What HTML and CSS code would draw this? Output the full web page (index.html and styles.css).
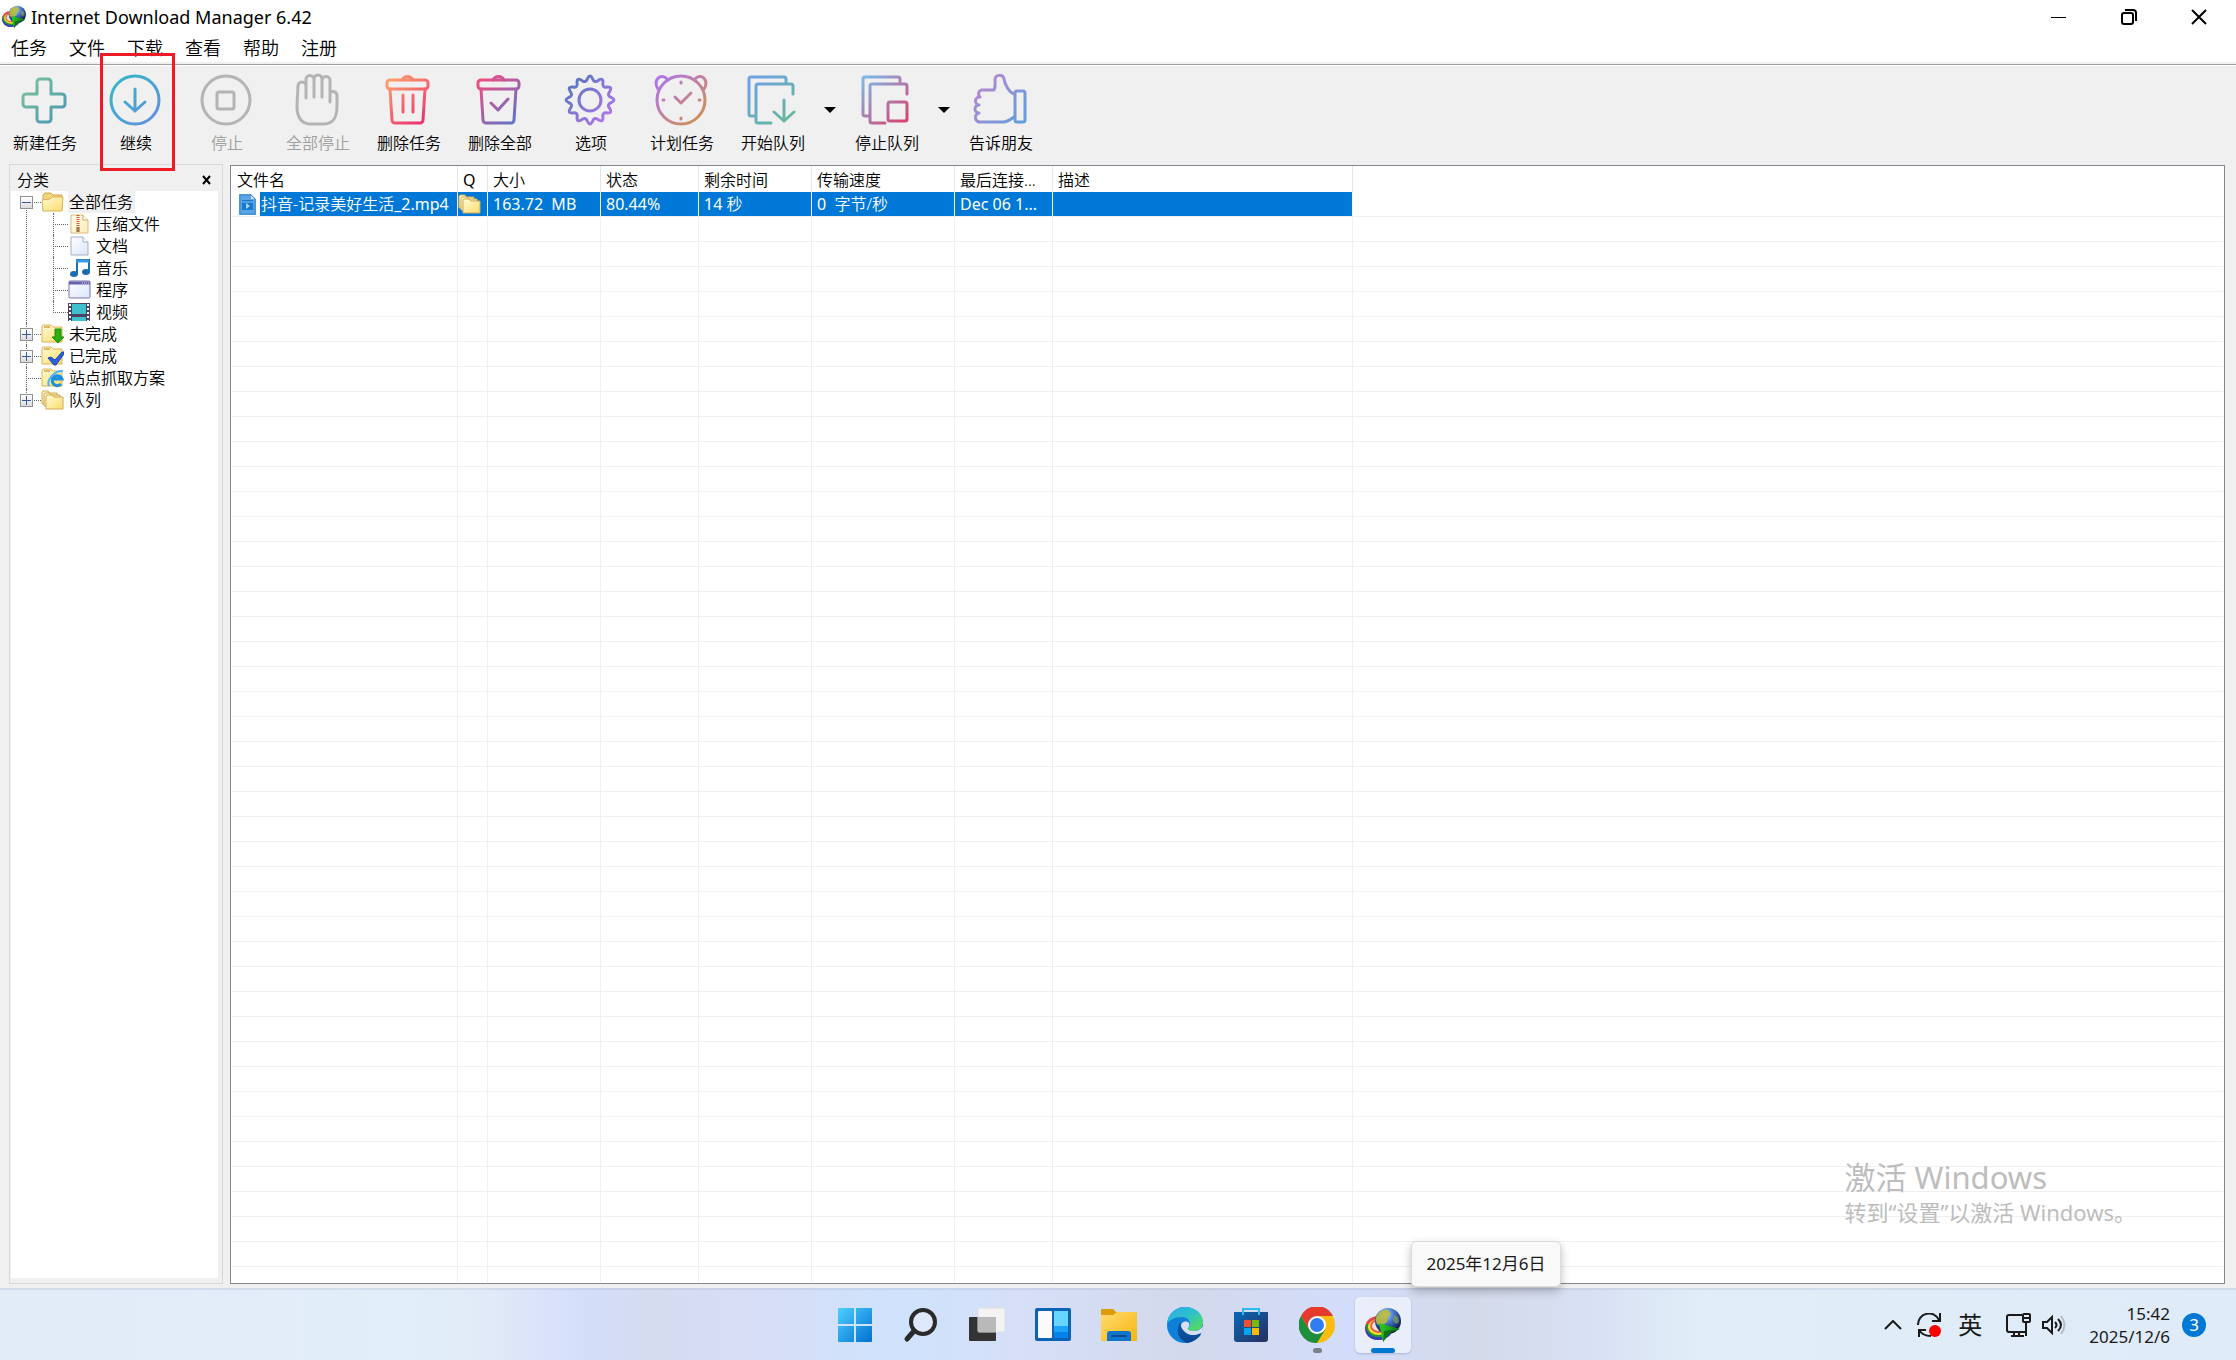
FILE: index.html
```
<!DOCTYPE html>
<html lang="zh-CN">

<head>
    <meta charset="UTF-8">
    <meta name="viewport" content="width=device-width, initial-scale=1.0">
    <title>Internet Download Manager 6.42</title>
    <link rel="stylesheet" href="styles.css">
</head>

<body>

    <!-- shared gradients and icons -->
    <svg class="defs" width="0" height="0" aria-hidden="true">
        <defs>
            <linearGradient id="gPlus" gradientUnits="userSpaceOnUse" x1="4" y1="4" x2="48" y2="48"><stop offset="0" stop-color="#7cc79a"/><stop offset="1" stop-color="#4a94b0"/></linearGradient>
            <linearGradient id="gResume" gradientUnits="userSpaceOnUse" x1="4" y1="4" x2="48" y2="48"><stop offset="0" stop-color="#36b8c6"/><stop offset="1" stop-color="#5f90e2"/></linearGradient>
            <linearGradient id="gTrash" gradientUnits="userSpaceOnUse" x1="6" y1="4" x2="42" y2="50"><stop offset="0" stop-color="#ffa36b"/><stop offset="1" stop-color="#ea2e72"/></linearGradient>
            <linearGradient id="gTrashAll" gradientUnits="userSpaceOnUse" x1="6" y1="8" x2="42" y2="50"><stop offset="0" stop-color="#ee4d84"/><stop offset="1" stop-color="#5b74c8"/></linearGradient>
            <linearGradient id="gGear" gradientUnits="userSpaceOnUse" x1="-20" y1="-20" x2="20" y2="20"><stop offset="0" stop-color="#5878bd"/><stop offset="1" stop-color="#b176ea"/></linearGradient>
            <linearGradient id="gClock" gradientUnits="userSpaceOnUse" x1="4" y1="6" x2="44" y2="48"><stop offset="0" stop-color="#b077e6"/><stop offset="1" stop-color="#d08f55"/></linearGradient>
            <linearGradient id="gStart" gradientUnits="userSpaceOnUse" x1="6" y1="6" x2="44" y2="48"><stop offset="0" stop-color="#6ea2e6"/><stop offset="1" stop-color="#67b898"/></linearGradient>
            <linearGradient id="gStop" gradientUnits="userSpaceOnUse" x1="6" y1="6" x2="44" y2="48"><stop offset="0" stop-color="#7fb4e6"/><stop offset="1" stop-color="#d9446f"/></linearGradient>
            <linearGradient id="gThumb" gradientUnits="userSpaceOnUse" x1="8" y1="6" x2="48" y2="44"><stop offset="0" stop-color="#b787d0"/><stop offset="1" stop-color="#649edb"/></linearGradient>
            <linearGradient id="gFolder" x1="0" y1="0" x2="1" y2="1"><stop offset="0" stop-color="#fffbd6"/><stop offset="1" stop-color="#fbdc6a"/></linearGradient>
            <linearGradient id="gPaper" x1="0" y1="0" x2="1" y2="1"><stop offset="0" stop-color="#ffffff"/><stop offset="1" stop-color="#d8e6fa"/></linearGradient>
            <linearGradient id="gZip" x1="0" y1="0" x2="1" y2="1"><stop offset="0" stop-color="#fffdf0"/><stop offset="1" stop-color="#fdebb4"/></linearGradient>
            <linearGradient id="gWin" x1="0" y1="0" x2="1" y2="1"><stop offset="0" stop-color="#4fd0ff"/><stop offset="1" stop-color="#0070d0"/></linearGradient>
            <linearGradient id="gExplorer" x1="0" y1="0" x2="1" y2="1"><stop offset="0" stop-color="#ffdb70"/><stop offset="1" stop-color="#f9b50f"/></linearGradient>
            <linearGradient id="gStore" x1="0" y1="0" x2="1" y2="1"><stop offset="0" stop-color="#0a67b8"/><stop offset="1" stop-color="#27305e"/></linearGradient>
            <linearGradient id="gEdge" x1="0" y1="0" x2="1" y2="1"><stop offset="0" stop-color="#2ea8ea"/><stop offset="0.5" stop-color="#2cc3c8"/><stop offset="1" stop-color="#62e040"/></linearGradient>
            <linearGradient id="gEdgeDark" x1="0" y1="0" x2="0" y2="1"><stop offset="0" stop-color="#0e5ba8"/><stop offset="1" stop-color="#0c4591"/></linearGradient>
            <radialGradient id="gGlobe" cx="0.4" cy="0.25" r="0.75"><stop offset="0" stop-color="#c4dcfa"/><stop offset="0.4" stop-color="#4c80d6"/><stop offset="1" stop-color="#06103c"/></radialGradient>
            <linearGradient id="gArrow" x1="0" y1="0" x2="1" y2="0"><stop offset="0" stop-color="#2ecc22"/><stop offset="1" stop-color="#0b7a10"/></linearGradient>
        </defs>

        <symbol id="idm" viewBox="0 0 36 36">
            <ellipse cx="13" cy="21" rx="13" ry="12" fill="#e0483c"/>
            <path d="M0 20c0 8 5 13 13 13 5 0 10-2 13-6l-4-6z" fill="#3440b8"/>
            <path d="M1 17c-1 7 4 13 12 13 6 0 10-2 12-6l-4-4z" fill="#27962e"/>
            <ellipse cx="14" cy="20" rx="11" ry="8" fill="#f8e12c"/>
            <ellipse cx="14" cy="19" rx="9" ry="7" fill="#e8604c"/>
            <ellipse cx="14" cy="19" rx="7" ry="5" fill="#f8dcdc"/>
            <circle cx="23" cy="14" r="13" fill="url(#gGlobe)"/>
            <path d="M11 11c2-6 7-9 12-8l3 4-3 3-1 5-5 4-5-2-1-3z" fill="#b9bd3a" opacity="0.900"/>
            <path d="M29 8l4 2 1 5-3 2-3-4z" fill="#86a05a" opacity="0.700"/>
            <path d="M14 16l21 6-10 4-7 9z" fill="url(#gArrow)"/>
            <path d="M18 35l1-11 16-2-10 4z" fill="#0a4d12" opacity="0.600"/>
        </symbol>

        <symbol id="folder" viewBox="0 0 23 20">
            <path d="M2 18V3l2-2h6l2 2h9v15z" fill="#f3d67c" stroke="#d0a650"/>
            <path d="M1 8l8-1 2-2h11l-1 14H2z" fill="url(#gFolder)" stroke="#d9b45a"/>
        </symbol>

        <symbol id="folderPlain" viewBox="0 0 23 20">
            <path d="M1 18V2l1-1h8l2 2h9v15z" fill="url(#gFolder)" stroke="#d9b45a"/>
            <path d="M3 2h6v2H3z" fill="#e0b868"/>
        </symbol>

        <symbol id="folders" viewBox="0 0 23 20">
            <g fill="url(#gFolder)" stroke="#d2aa58">
                <path d="M1 14V2l1-1h5l1 2h8v11z"/>
                <path d="M3 16V4l1-1h5l1 2h9v11z"/>
                <path d="M5 19V6l1-1h5l2 2h9v12z"/>
            </g>
        </symbol>
    </svg>

    <header class="titlebar">
        <svg class="app-icon"><use href="#idm"/></svg>
        <h1>Internet Download Manager 6.42</h1>
        <div class="window-buttons">
            <button type="button" aria-label="最小化"><svg width="16" height="16"><path d="M0 8.500h15"/></svg></button>
            <button type="button" aria-label="还原"><svg width="16" height="16"><rect x="1" y="4" width="11" height="11" rx="2"/><path d="M4 1h8a3 3 0 0 1 3 3v8"/></svg></button>
            <button type="button" aria-label="关闭"><svg width="16" height="16"><path d="M1 1l14 14M15 1L1 15"/></svg></button>
        </div>
    </header>

    <nav class="menubar">
        <a href="#">任务</a>
        <a href="#">文件</a>
        <a href="#">下载</a>
        <a href="#">查看</a>
        <a href="#">帮助</a>
        <a href="#">注册</a>
    </nav>

    <div class="toolbar">
        <button type="button" class="tool">
            <svg viewBox="0 0 52 52" stroke="url(#gPlus)"><path d="M22 5h8a3 3 0 0 1 3 3v12h11a3 3 0 0 1 3 3v7a3 3 0 0 1-3 3H33v12a3 3 0 0 1-3 3h-8a3 3 0 0 1-3-3V33H8a3 3 0 0 1-3-3v-7a3 3 0 0 1 3-3h11V8a3 3 0 0 1 3-3z"/></svg>
            <span>新建任务</span>
        </button>
        <button type="button" class="tool marked">
            <svg viewBox="0 0 52 52" stroke="url(#gResume)"><circle cx="26" cy="26" r="24"/><path d="M26 15v22M16 28l10 9 10-9"/></svg>
            <span>继续</span>
        </button>
        <button type="button" class="tool" disabled>
            <svg viewBox="0 0 52 52" stroke="#b4b4b4"><circle cx="26" cy="26" r="24"/><rect x="17" y="18" width="17" height="17" rx="2"/></svg>
            <span>停止</span>
        </button>
        <button type="button" class="tool" disabled>
            <svg viewBox="0 0 52 52" stroke="#b4b4b4"><path d="M15 24V12a4 4 0 0 0-8 0L6 32c0 11 4 17 12 18h16c9-1 12-7 12-18V21a4 4 0 0 0-7-2v9M15 13V6a4 4 0 0 1 8-1v18M23 5a4 4 0 0 1 8 0v18M31 6a4 4 0 0 1 8 1v14"/></svg>
            <span>全部停止</span>
        </button>
        <button type="button" class="tool">
            <svg viewBox="0 0 52 52" stroke="url(#gTrash)"><rect x="5" y="6" width="41" height="9" rx="3"/><path d="M20 6a6 6 0 0 1 11 0M8 15l2 31a3 3 0 0 0 3 3h25a3 3 0 0 0 3-3l2-31M21 21v17M31 21v17"/></svg>
            <span>删除任务</span>
        </button>
        <button type="button" class="tool">
            <svg viewBox="0 0 52 52" stroke="url(#gTrashAll)"><rect x="5" y="6" width="41" height="9" rx="3"/><path d="M20 6a6 6 0 0 1 11 0M8 15l2 31a3 3 0 0 0 3 3h25a3 3 0 0 0 3-3l2-31M18 29l7 7 10-11"/></svg>
            <span>删除全部</span>
        </button>
        <button type="button" class="tool">
            <svg viewBox="-26 -26 52 52" stroke="url(#gGear)"><circle r="11"/><path d="M21.400 2.500Q16.400 4.400 19.700 8.400Q22.900 13.200 17.300 12.900Q12 12 12.900 17.300Q13.200 22.900 8.400 19.700Q4.400 16.400 2.500 21.400Q0 26.500-2.500 21.400Q-4.400 16.400-8.400 19.700Q-13.200 22.900-12.900 17.300Q-12 12-17.300 12.900Q-22.900 13.200-19.700 8.400Q-16.400 4.400-21.400 2.500Q-26.500 0-21.400-2.500Q-16.400-4.400-19.700-8.400Q-22.900-13.200-17.300-12.900Q-12-12-12.900-17.300Q-13.200-22.900-8.400-19.700Q-4.400-16.400-2.500-21.400Q0-26.500 2.500-21.400Q4.400-16.400 8.400-19.700Q13.200-22.900 12.900-17.300Q12-12 17.300-12.900Q22.900-13.200 19.700-8.400Q16.400-4.400 21.400-2.500Q26.500 0 21.400 2.500Z"/></svg>
            <span>选项</span>
        </button>
        <button type="button" class="tool">
            <svg viewBox="0 0 52 52" stroke="url(#gClock)"><circle cx="26" cy="26" r="24"/><path d="M3 15C-3 7 6-3 13 6M49 15C55 7 46-3 39 6M20 23l6 6 10-10M26 8v1M26 44v1M8 26h1M44 26h1"/></svg>
            <span>计划任务</span>
        </button>
        <button type="button" class="tool">
            <svg viewBox="0 0 52 52" stroke="url(#gStart)"><path d="M40 9V5a2 2 0 0 0-2-2H5a2 2 0 0 0-2 2v35a2 2 0 0 0 2 2h4M47 20v-8a2 2 0 0 0-2-2H12a2 2 0 0 0-2 2v35a2 2 0 0 0 2 2h13M38 26v21M28 38l10 9 10-9"/></svg>
            <span>开始队列</span>
        </button>
        <button type="button" class="drop" aria-label="选择开始队列"></button>
        <button type="button" class="tool">
            <svg viewBox="0 0 52 52" stroke="url(#gStop)"><path d="M40 9V5a2 2 0 0 0-2-2H5a2 2 0 0 0-2 2v35a2 2 0 0 0 2 2h4M47 20v-8a2 2 0 0 0-2-2H12a2 2 0 0 0-2 2v35a2 2 0 0 0 2 2h13"/><rect x="28" y="28" width="19" height="19" rx="2"/></svg>
            <span>停止队列</span>
        </button>
        <button type="button" class="drop" aria-label="选择停止队列"></button>
        <button type="button" class="tool">
            <svg viewBox="0 0 52 52" stroke="url(#gThumb)"><rect x="41" y="17" width="10" height="31" rx="2"/><path d="M40 20c-5-2-9-9-10-15-1-5-9-5-9 1 0 3 1 6-1 10H8a4 4 0 0 0-2 7 4 4 0 0 0-1 8 4 4 0 0 0 0 8 4 4 0 0 0 2 9h22c4 0 7-2 11-5"/></svg>
            <span>告诉朋友</span>
        </button>
    </div>

    <main class="content">

        <aside class="sidebar">
            <div class="sidebar-head">
                <h2>分类</h2>
                <button type="button" aria-label="关闭分类"><svg width="10" height="10"><path d="M1 1l7 8M8 1L1 9"/></svg></button>
            </div>
            <ul class="tree">
                <li>
                    <div class="row"><button type="button" class="toggle open" aria-label="折叠"></button><svg><use href="#folder"/></svg><span class="selected">全部任务</span></div>
                    <ul>
                        <li><div class="row"><svg viewBox="0 0 23 20"><path d="M3 1h12l5 5v13H3z" fill="url(#gZip)" stroke="#d8ba80"/><path d="M15 1v5h5" fill="#fff" stroke="#d0a860"/><path d="M10 1v18" stroke="#c8602e" stroke-width="3" stroke-dasharray="1 1"/><path d="M10 13v5" stroke="#a07850" stroke-width="3"/></svg><span>压缩文件</span></div></li>
                        <li><div class="row"><svg viewBox="0 0 23 20"><path d="M3 1h12l5 5v13H3z" fill="url(#gPaper)" stroke="#a9aec2"/><path d="M15 1v5h5" fill="#fff" stroke="#a9aec2"/></svg><span>文档</span></div></li>
                        <li><div class="row"><svg viewBox="0 0 23 20"><path d="M9 16V2h12v12" fill="none" stroke="#1a6fb5" stroke-width="2"/><path d="M8 3h13" stroke="#3b9be0" stroke-width="3"/><ellipse cx="6" cy="16" rx="4" ry="3" fill="#1c6cae"/><ellipse cx="18" cy="14" rx="4" ry="3" fill="#1c6cae"/></svg><span>音乐</span></div></li>
                        <li><div class="row"><svg viewBox="0 0 23 20"><rect x="1" y="1" width="21" height="17" rx="1" fill="url(#gPaper)" stroke="#7d72b0"/><path d="M1 3h21" stroke="#6a60ac" stroke-width="3"/><path d="M14 3h7" stroke="#e4e0ff" stroke-dasharray="1 1"/></svg><span>程序</span></div></li>
                        <li><div class="row"><svg viewBox="0 0 23 20"><path d="M0 1h22v18H0z" fill="#4a4268"/><path d="M4 2h14v10H4zM4 15h14v4H4z" fill="#3fc0cc"/><path d="M2 2v17M20 2v17" stroke="#fff" stroke-width="2" stroke-dasharray="2 2"/></svg><span>视频</span></div></li>
                    </ul>
                </li>
                <li><div class="row"><button type="button" class="toggle" aria-label="展开"></button><svg viewBox="0 0 23 20"><use href="#folderPlain"/><path d="M14 5h6v8h3l-6 6-6-6h3z" fill="#2fae12" stroke="#1c8a0a"/></svg><span>未完成</span></div></li>
                <li><div class="row"><button type="button" class="toggle" aria-label="展开"></button><svg viewBox="0 0 23 20"><use href="#folderPlain"/><path d="M7 12l3-1 4 3 7-8h2v2l-8 11h-2z" fill="#2a62dc" stroke="#1c45ae"/></svg><span>已完成</span></div></li>
                <li><div class="row leaf"><svg viewBox="0 0 23 20"><use href="#folderPlain"/><path d="M10 11h11a5 5 0 1 0-1 5" fill="none" stroke="#1e8fe0" stroke-width="3"/><path d="M8 18C5 12 14 2 22 3" fill="none" stroke="#4db4f4" stroke-width="2"/></svg><span>站点抓取方案</span></div></li>
                <li><div class="row"><button type="button" class="toggle" aria-label="展开"></button><svg><use href="#folders"/></svg><span>队列</span></div></li>
            </ul>
        </aside>

        <section class="list">
            <table>
                <colgroup>
                    <col class="c-name"><col class="c-queue"><col class="c-size"><col class="c-status"><col class="c-left"><col class="c-speed"><col class="c-last"><col class="c-desc"><col>
                </colgroup>
                <thead>
                    <tr>
                        <th>文件名</th>
                        <th class="latin">Q</th>
                        <th>大小</th>
                        <th>状态</th>
                        <th>剩余时间</th>
                        <th>传输速度</th>
                        <th>最后连接...</th>
                        <th>描述</th>
                        <td></td>
                    </tr>
                </thead>
                <tbody>
                    <tr class="current">
                        <td class="file">
                            <div>
                                <svg viewBox="0 0 17 22"><path d="M0 1h12l5 5v16H0z" fill="#5aa5e4"/><path d="M12 0v6h5z" fill="#cfe6fa"/><path d="M1 2h11l4 4v15H1z" fill="none" stroke="#3f88cc"/><rect x="3" y="7" width="11" height="10" fill="#1679cf"/><path d="M3 9h11" stroke="#8cc6f4"/><path d="M7 10v6l4-3z" fill="#a9d8f8"/></svg>
                                <span>抖音-记录美好生活<b>_2.mp4</b></span>
                            </div>
                        </td>
                        <td class="queue"><svg><use href="#folders"/></svg></td>
                        <td class="latin">163.72&nbsp; MB</td>
                        <td class="latin">80.44%</td>
                        <td><b>14</b> 秒</td>
                        <td><b>0</b>&nbsp; 字节/秒</td>
                        <td class="latin">Dec 06 1...</td>
                        <td></td>
                        <td></td>
                    </tr>
                    <tr class="filler">
                        <td></td><td></td><td></td><td></td><td></td><td></td><td></td><td></td><td></td>
                    </tr>
                </tbody>
            </table>
        </section>

    </main>

    <div class="watermark">
        <p class="big">激活 Windows</p>
        <p>转到“设置”以激活 Windows。</p>
    </div>

    <div class="tooltip" role="tooltip">2025年12月6日</div>

    <footer class="taskbar">
        <div class="apps">
            <button type="button" aria-label="开始"><svg viewBox="0 0 36 36"><path d="M1 2a1 1 0 0 1 1-1h15v16H1zM19 1h15a1 1 0 0 1 1 1v15H19zM1 19h16v16H2a1 1 0 0 1-1-1zM19 19h16v15a1 1 0 0 1-1 1H19z" fill="url(#gWin)"/></svg></button>
            <button type="button" aria-label="搜索"><svg viewBox="0 0 36 36" fill="none" stroke="#2a2a2a"><circle cx="20" cy="15" r="12" fill="#e6effc" fill-opacity="0.600" stroke-width="4"/><path d="M11 24L4 32" stroke-width="5" stroke-linecap="round"/></svg></button>
            <button type="button" aria-label="任务视图"><svg viewBox="0 0 36 36"><rect x="0" y="10" width="27" height="24" rx="1" fill="#333"/><rect x="9" y="1" width="27" height="24" rx="1" fill="#f3f3f3" stroke="#ddd"/><path d="M9 10h18v15H9z" fill="#b9b9b9"/></svg></button>
            <button type="button" aria-label="小组件"><svg viewBox="0 0 36 36"><rect x="0" y="1" width="36" height="33" rx="2" fill="#0c63b6"/><rect x="3" y="4" width="14" height="27" rx="1" fill="#fafafa"/><path d="M19 4h14v15H19z" fill="#66d6ff"/><path d="M19 19h14v6H19z" fill="#1aa3f8"/><path d="M19 25h14v6H19z" fill="#0581ea"/></svg></button>
            <button type="button" aria-label="文件资源管理器"><svg viewBox="0 0 36 36"><path d="M0 3a1 1 0 0 1 1-1h11l3 3h20v8H0z" fill="#dd9c05"/><path d="M0 8h12l4-3h20v28a1 1 0 0 1-1 1H1a1 1 0 0 1-1-1z" fill="url(#gExplorer)"/><path d="M6 34v-7a3 3 0 0 1 3-3h18a3 3 0 0 1 3 3v7z" fill="#0f76cc"/><path d="M11 29h14" stroke="#0b4a96" stroke-width="2" stroke-linecap="round"/></svg></button>
            <button type="button" aria-label="Edge"><svg viewBox="0 0 36 36"><circle cx="18" cy="18" r="18" fill="#0f7fd8"/><path d="M0 16C2 6 9 0 18 0c11 0 18 7 18 15 0 5-4 9-9 9-4 0-7-1-6-3 2-2 2-3 2-5-1-4-4-6-8-6-7 0-12 3-15 6z" fill="url(#gEdge)"/><path d="M14 15c-7 8-2 18 6 21 6-1 11-4 14-9-5 2-12 2-16-2-3-3-4-6-4-10z" fill="url(#gEdgeDark)"/><path d="M14 19c0-4 5-6 8-3 1 2 0 4-1 5-1 2 2 3 6 3 4 0 7-2 9-5 0 3-1 6-2 8-5 2-12 2-16-2-2-2-4-4-4-6z" fill="#d8dff2"/><path d="M14 19c-1 8 10 12 20 7l-1 3c-7 4-19 2-19-10z" fill="#0d4f9d"/></svg></button>
            <button type="button" aria-label="Microsoft Store"><svg viewBox="0 0 36 36"><path d="M10 8V2h16v6" fill="none" stroke="#2cb9f4" stroke-width="2"/><path d="M1 5h34v27a3 3 0 0 1-3 3H4a3 3 0 0 1-3-3z" fill="url(#gStore)"/><path d="M10 8V5M26 8V5" stroke="#2cb9f4" stroke-width="2"/><path d="M11 13h7v7h-7z" fill="#f3512a"/><path d="M19 13h7v7h-7z" fill="#7db90c"/><path d="M11 21h7v7h-7z" fill="#04a3ee"/><path d="M19 21h7v7h-7z" fill="#feb903"/></svg></button>
            <button type="button" class="running" aria-label="Chrome"><svg viewBox="0 0 36 36"><circle cx="18" cy="18" r="18" fill="#fbbc10"/><path d="M2 9a18 18 0 0 1 32 0H18l-8 13z" fill="#e43b2e"/><path d="M2 9a18 18 0 0 0 16 27l8-13-8 3-8-4z" fill="#1e8e3e"/><circle cx="18" cy="18" r="9" fill="#fff"/><circle cx="18" cy="18" r="7" fill="#2f7bf0"/></svg></button>
            <button type="button" class="active" aria-label="Internet Download Manager"><svg><use href="#idm"/></svg></button>
        </div>
        <div class="tray">
            <button type="button" class="chevron" aria-label="显示隐藏的图标"><svg width="18" height="10"><path d="M1 9l8-8 8 8"/></svg></button>
            <button type="button" class="sync" aria-label="更新"><svg width="24" height="24"><path d="M1 12a11 11 0 0 1 21-5M23 0v8h-8M2 24v-7h7M2 17c3 5 7 6 12 6"/><circle cx="18" cy="18" r="6" fill="#f00" stroke="none"/></svg></button>
            <button type="button" class="ime">英</button>
            <button type="button" class="network" aria-label="网络和声音"><svg width="25" height="24"><path d="M16 2H3a2 2 0 0 0-2 2v13a2 2 0 0 0 2 2h17M20 10v13M8 19v4M13 19v4M5 23h13"/><rect x="17" y="1" width="7" height="8" rx="1"/><path d="M18 5h5"/></svg><svg width="25" height="20"><path d="M1 7v6h4l5 5V2L5 7zM13 7q3 3 0 6M16 4q6 6 0 12"/><path d="M19 1q7 9 0 18" stroke="#b4bcc6"/></svg></button>
            <button type="button" class="clock"><time>15:42</time><time>2025/12/6</time></button>
            <button type="button" class="badge">3</button>
        </div>
    </footer>

</body>

</html>
```
FILE: styles.css
```
* {
    box-sizing: border-box;
}

body {
    margin: 0;
    height: 100vh;
    display: flex;
    flex-direction: column;
    overflow: hidden;
    background: #f0f0f0;
    color: #000;
    font-family: "Noto Sans", "Noto Sans CJK SC", sans-serif;
    font-size: 16px;
    font-weight: 350;
}

button {
    margin: 0;
    padding: 0;
    border: none;
    background: none;
    color: inherit;
    font: inherit;
}

h1, h2, p, ul {
    margin: 0;
    padding: 0;
    font-weight: inherit;
}

ul {
    list-style: none;
}

a {
    color: inherit;
    text-decoration: none;
}

.defs {
    position: absolute;
}

/* title + menu */

.titlebar {
    display: flex;
    align-items: center;
    height: 34px;
    padding: 0 2px;
    background: #fff;
}

.app-icon {
    width: 24px;
    height: 24px;
    margin-right: 5px;
}

.titlebar h1 {
    flex: 1;
    font-size: 18px;
    font-weight: 400;
    line-height: 24px;
}

.window-buttons {
    display: flex;
}

.window-buttons button {
    display: flex;
    align-items: center;
    justify-content: center;
    width: 70px;
    height: 34px;
}

.window-buttons svg {
    fill: none;
    stroke: #000;
    stroke-width: 2px;
}

.window-buttons button:first-child svg {
    stroke-width: 1px;
}

.menubar {
    display: flex;
    gap: 22px;
    height: 28px;
    padding-left: 11px;
    background: #fff;
    font-size: 18px;
    line-height: 28px;
}

/* toolbar */

.toolbar {
    display: flex;
    gap: 1px;
    height: 102px;
    padding-top: 10px;
    border-top: 2px solid #f0f0f0;
    box-shadow: inset 0 1px #a0a0a0, inset 0 2px #fff;
}

.tool {
    position: relative;
    display: flex;
    flex-direction: column;
    align-items: center;
    gap: 7px;
    width: 90px;
}

.tool svg {
    width: 52px;
    height: 52px;
    margin-right: 2px;
    fill: none;
    stroke-width: 3px;
    stroke-linecap: round;
    stroke-linejoin: round;
    overflow: visible;
}

.tool span {
    line-height: 20px;
}

.tool:disabled span {
    color: #a0a0a0;
}

.marked::after {
    content: "";
    position: absolute;
    inset: -21px 6px -7px 9px;
    border: 3px solid #ed1c24;
}

.drop {
    display: flex;
    justify-content: center;
    width: 22px;
    padding-top: 33px;
}

.drop::after {
    content: "";
    border: 6px solid transparent;
    border-top-color: #000;
    border-bottom: none;
}

/* main area */

.content {
    flex: 1;
    display: flex;
    gap: 7px;
    min-height: 0;
    padding: 0 11px 4px 9px;
}

.sidebar {
    display: flex;
    flex-direction: column;
    width: 214px;
    padding: 0 4px 5px 1px;
    border: 1px solid #d9d9d9;
}

.sidebar-head {
    display: flex;
    align-items: center;
    justify-content: space-between;
    height: 26px;
    padding: 4px 6px 0 6px;
}

.sidebar-head h2 {
    font-size: 16px;
    line-height: 22px;
}

.sidebar-head button {
    display: flex;
}

.sidebar-head svg {
    fill: none;
    stroke: #000;
    stroke-width: 2px;
}

.tree {
    flex: 1;
    background: #fff;
}

.tree li {
    position: relative;
}

.tree li::before {
    content: "";
    position: absolute;
    top: 0;
    bottom: 0;
    left: 15px;
    border-left: 1px dotted #666;
}

.tree > li:first-child::before {
    top: 12px;
}

.tree li:last-child::before {
    bottom: auto;
    height: 12px;
}

.tree ul li::before {
    left: 42px;
}

.row {
    position: relative;
    display: flex;
    align-items: center;
    height: 22px;
    padding-left: 9px;
}

.row::before {
    content: "";
    position: absolute;
    top: 11px;
    left: 15px;
    width: 15px;
    border-top: 1px dotted #666;
}

.tree ul .row::before {
    left: 42px;
}

.row.leaf {
    padding-left: 30px;
}

.tree ul .row {
    padding-left: 57px;
}

.row svg {
    width: 23px;
    height: 20px;
    margin-right: 4px;
}

.row span {
    padding: 0 2px 0 1px;
    line-height: 22px;
}

.row .selected {
    background: #f0f0f0;
}

/* plus / minus boxes */
.toggle {
    position: relative;
    width: 13px;
    height: 13px;
    margin-right: 8px;
    border: 1px solid #919191;
    background:
        linear-gradient(#3a5a9c, #3a5a9c) center / 9px 1px no-repeat,
        linear-gradient(#3a5a9c, #3a5a9c) center / 1px 9px no-repeat,
        linear-gradient(#fff, #dcdcdc);
}

.toggle.open {
    background:
        linear-gradient(#3a5a9c, #3a5a9c) center / 9px 1px no-repeat,
        linear-gradient(#fff, #dcdcdc);
}

/* download list */

.list {
    flex: 1;
    margin-top: 1px;
    padding: 0 1px 1px;
    border: 1px solid #828790;
    background: #fff;
}

.list table {
    width: 100%;
    height: 100%;
    table-layout: fixed;
    border-collapse: separate;
    border-spacing: 0;
    background: repeating-linear-gradient(transparent 0 24px, #f0f0f0 24px 25px) 0 26px no-repeat;
}

.c-name { width: 226px; }
.c-queue { width: 30px; }
.c-size, .c-left { width: 113px; }
.c-status, .c-last { width: 98px; }
.c-speed { width: 143px; }
.c-desc { width: 300px; }

.list th,
.list td {
    padding: 0 0 0 5px;
    border-right: 1px solid #f0f0f0;
    text-align: left;
    white-space: nowrap;
    overflow: hidden;
}

.list tr > :last-child {
    border-right: none;
}

.list th {
    height: 26px;
    padding-top: 2px;
    border-right-color: #e5e5e5;
    font-weight: inherit;
    line-height: 22px;
}

.list .latin,
.list b {
    font-weight: 400;
}

.current td {
    height: 25px;
    border-bottom: 1px solid #f0f0f0;
    background: #0078d7;
    color: #fff;
    line-height: 24px;
}

.current td:last-child {
    background: none;
}

.current .file {
    padding-left: 7px;
    background: none;
}

.file div {
    display: flex;
    align-items: center;
    gap: 4px;
}

.file svg {
    width: 17px;
    height: 22px;
}

.file span {
    flex: 1;
    padding-left: 1px;
    background: #0078d7;
}

.current .queue {
    padding-left: 0;
}

.queue svg {
    display: block;
    width: 23px;
    height: 20px;
}

.filler td {
    height: auto;
}

/* overlays */

.watermark {
    position: absolute;
    right: 100px;
    bottom: 132px;
    color: #bdbdbd;
    font-size: 22px;
    font-weight: 400;
    line-height: 32px;
}

.watermark .big {
    font-size: 31px;
    line-height: 38px;
}

.tooltip {
    position: absolute;
    left: calc(50% + 293px);
    bottom: 73px;
    width: 150px;
    height: 46px;
    border: 1px solid #dcdcdc;
    border-radius: 5px;
    background: #f9f9f9;
    box-shadow: 0 4px 10px rgba(0, 0, 0, 0.25);
    color: #1a1a1a;
    font-size: 17px;
    font-weight: 400;
    line-height: 44px;
    text-align: center;
    z-index: 2;
}

/* windows taskbar */

.taskbar {
    display: grid;
    grid-template-columns: 1fr auto 1fr;
    align-items: center;
    height: 72px;
    border-top: 2px solid rgba(150, 160, 185, 0.2);
    background: linear-gradient(90deg, #e1ecf7, #e3ecf9 9%, #e0eff8 18%, #e1eaf7 22%, #d4defa 26%, #d5dcf0 29%, #d7def5 33%, #cfe2fc 40%, #d6dff7 46%, #d3d9ec 53%, #d3ddfa 60%, #d4daea 66%, #d8e0f4 71%, #e0eef7 76%, #dfebf8) border-box;
}

.apps {
    grid-column: 2;
    display: flex;
    gap: 10px;
    padding-left: 2px;
}

.apps button {
    position: relative;
    display: flex;
    align-items: center;
    justify-content: center;
    width: 56px;
    height: 56px;
    border-radius: 5px;
}

.apps svg {
    width: 36px;
    height: 36px;
}

.apps .active {
    background: #eaeefa;
    box-shadow: 0 1px 2px rgba(80, 90, 130, 0.3);
}

.running::after,
.active::after {
    content: "";
    position: absolute;
    bottom: 0;
    width: 9px;
    height: 5px;
    border-radius: 3px;
    background: #7b7f8a;
}

.active::after {
    width: 24px;
    background: #0078d4;
}

.tray {
    display: flex;
    align-items: center;
    justify-content: flex-end;
    padding-right: 30px;
    color: #1a1a1a;
    font-weight: 400;
}

.tray svg {
    display: block;
    fill: none;
    stroke: #1a1a1a;
    stroke-width: 2px;
}

.chevron {
    margin-right: 15px;
}

.sync {
    margin-right: 17px;
}

.ime {
    margin-right: 24px;
    font-size: 24px;
    line-height: 32px;
}

.network {
    display: flex;
    align-items: center;
    gap: 11px;
    margin-right: 22px;
}

.clock {
    display: flex;
    flex-direction: column;
    margin-right: 12px;
    font-size: 17px;
    line-height: 23px;
    text-align: right;
}

.badge {
    width: 24px;
    height: 24px;
    border-radius: 50%;
    background: #0078d4;
    color: #fff;
    font-size: 17px;
    line-height: 24px;
}
```
